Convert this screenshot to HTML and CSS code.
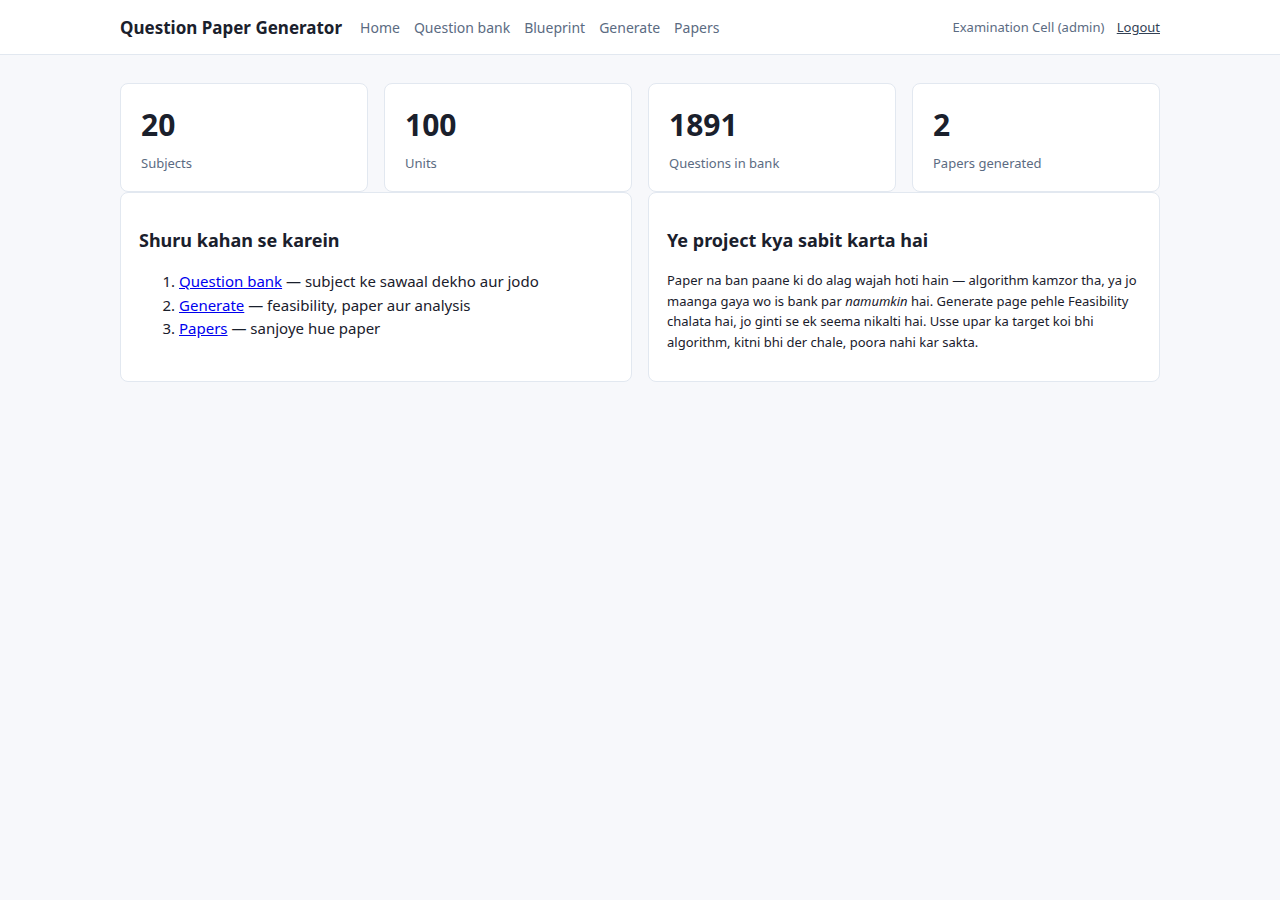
FILE: index.html
```html
<!DOCTYPE html>
<html lang="en">
<head>
    <meta charset="UTF-8">
    <meta name="viewport" content="width=device-width, initial-scale=1.0">
    <title>Question Paper Generator</title>
    <link rel="stylesheet" href="styles.css">
</head>
<body>
    <header class="topbar">
        <div class="wrap bar">
            <a class="brand" href="#">Question Paper Generator</a>
            <nav class="nav">
                <a href="#">Home</a>
                <a href="#">Question bank</a>
                <a href="#">Blueprint</a>
                <a href="#">Generate</a>
                <a href="#">Papers</a>
            </nav>
            <div class="user">
                <span>Examination Cell (admin)</span>
                <a href="#" class="logout">Logout</a>
            </div>
        </div>
    </header>

    <main class="wrap">
        <div class="stats">
            <div class="card stat">
                <div class="num">20</div>
                <div class="lbl">Subjects</div>
            </div>
            <div class="card stat">
                <div class="num">100</div>
                <div class="lbl">Units</div>
            </div>
            <div class="card stat">
                <div class="num">1891</div>
                <div class="lbl">Questions in bank</div>
            </div>
            <div class="card stat">
                <div class="num">2</div>
                <div class="lbl">Papers generated</div>
            </div>
        </div>

        <div class="two">
            <div class="card box">
                <h3>Shuru kahan se karein</h3>
                <ol>
                    <li><a href="#">Question bank</a> — subject ke sawaal dekho aur jodo</li>
                    <li><a href="#">Generate</a> — feasibility, paper aur analysis</li>
                    <li><a href="#">Papers</a> — sanjoye hue paper</li>
                </ol>
            </div>
            <div class="card box">
                <h3>Ye project kya sabit karta hai</h3>
                <p class="small">Paper na ban paane ki do alag wajah hoti hain — algorithm kamzor tha, ya jo maanga gaya wo is bank par <em>namumkin</em> hai. Generate page pehle Feasibility chalata hai, jo ginti se ek seema nikalti hai. Usse upar ka target koi bhi algorithm, kitni bhi der chale, poora nahi kar sakta.</p>
            </div>
        </div>
    </main>
</body>
</html>
```

FILE: styles.css
```css
body {
    margin: 0;
    background: #f7f8fb;
    color: #1a202c;
    font-family: "Noto Sans", "Open Sans", sans-serif;
}
.wrap {
    width: 1040px;
    margin: 0 auto;
}
.topbar {
    background: #fff;
    border-bottom: 1px solid #e2e8f0;
}
.topbar .bar {
    height: 54px;
    display: flex;
    align-items: center;
}
.brand {
    font-size: 17px;
    font-weight: 700;
    color: #1a202c;
    text-decoration: none;
    margin-right: 18px;
}
.nav {
    display: flex;
    gap: 14px;
}
.nav a {
    color: #5b6b82;
    text-decoration: none;
    font-size: 14px;
}
.user {
    margin-left: auto;
    font-size: 13px;
    color: #5b6b82;
}
.user .logout {
    color: #334155;
    margin-left: 9px;
}

main.wrap {
    padding-top: 28px;
}
.card {
    background: #fff;
    border: 1px solid #e2e8f0;
    border-radius: 8px;
}
.stats {
    display: grid;
    grid-template-columns: repeat(4, 1fr);
    gap: 16px;
}
.stat {
    padding: 20px 20px 19px;
    height: 68px;
}
.stat .num {
    font-size: 30px;
    font-weight: 700;
    line-height: 42px;
}
.stat .lbl {
    margin-top: 8px;
    font-size: 13px;
    color: #5b6b82;
}
.two {
    display: grid;
    grid-template-columns: 1fr 1fr;
    gap: 16px;
}
.box {
    padding: 18px;
    height: 152px;
}
.box h3 {
    font-size: 18px;
    margin: 17px 0 17px;
    line-height: 25px;
}
.box ol {
    margin: 0;
    padding-left: 40px;
    font-size: 15px;
    line-height: 23.5px;
}
.box ol a {
    color: #0000ee;
}
.small {
    margin: 0;
    font-size: 13px;
    line-height: 20.6px;
}
```
